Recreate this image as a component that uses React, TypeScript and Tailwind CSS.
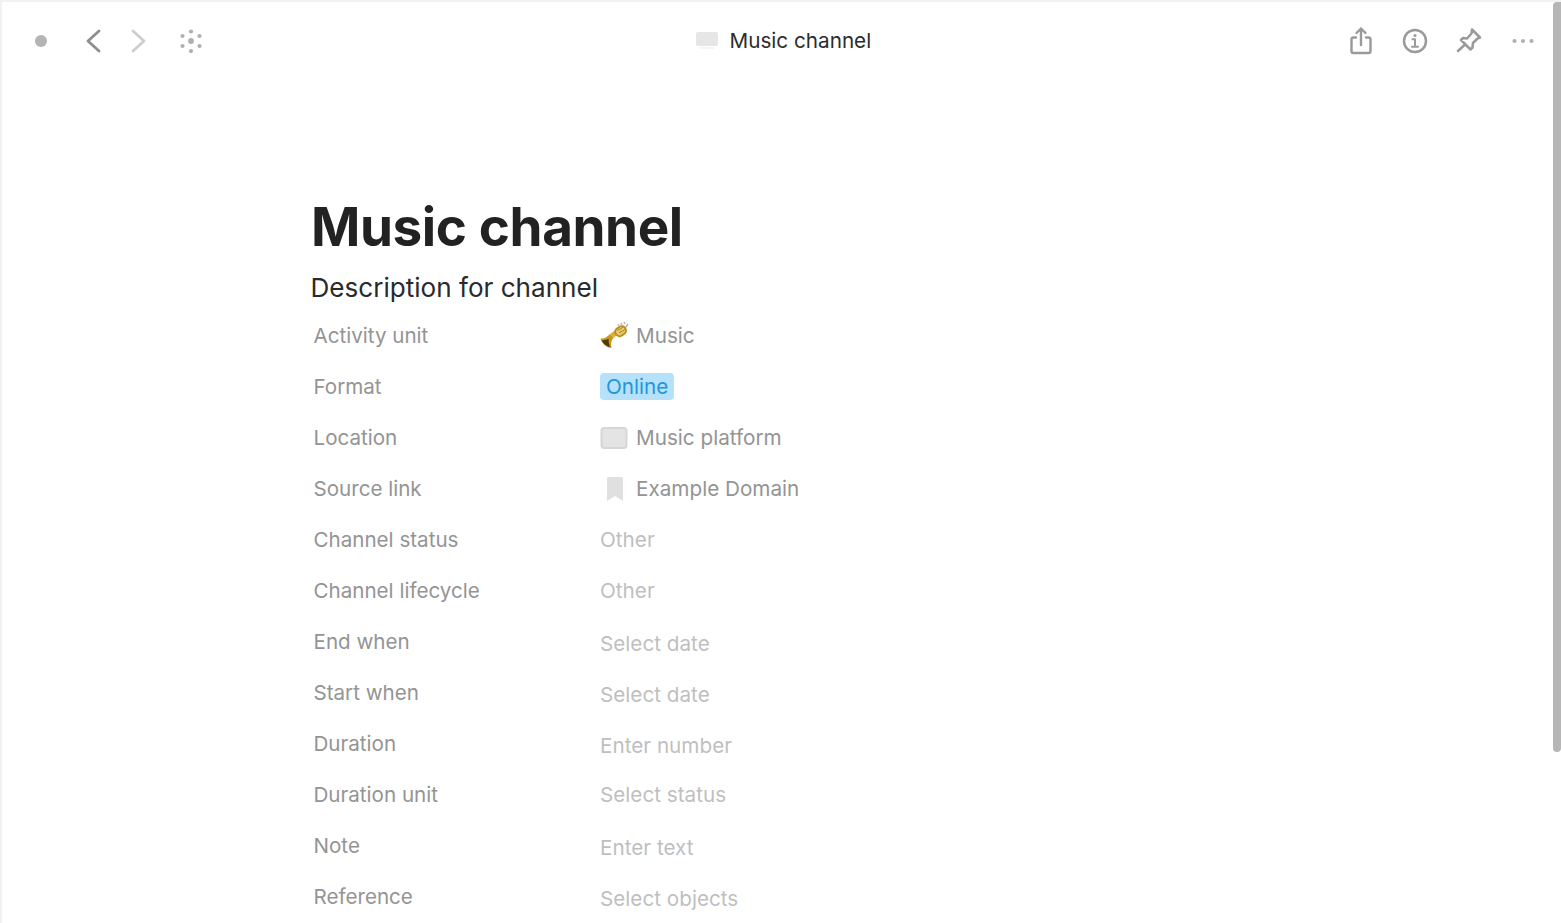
const rows: { label: string; value: string; kind: 'unit' | 'tag' | 'screen' | 'bookmark' | 'empty'; nudge?: string }[] = [
  { label: 'Activity unit', value: 'Music', kind: 'unit' },
  { label: 'Format', value: 'Online', kind: 'tag' },
  { label: 'Location', value: 'Music platform', kind: 'screen' },
  { label: 'Source link', value: 'Example Domain', kind: 'bookmark' },
  { label: 'Channel status', value: 'Other', kind: 'empty' },
  { label: 'Channel lifecycle', value: 'Other', kind: 'empty' },
  { label: 'End when', value: 'Select date', kind: 'empty', nudge: 'translate-y-[2px]' },
  { label: 'Start when', value: 'Select date', kind: 'empty', nudge: 'translate-y-[2px]' },
  { label: 'Duration', value: 'Enter number', kind: 'empty', nudge: 'translate-y-[2px]' },
  { label: 'Duration unit', value: 'Select status', kind: 'empty' },
  { label: 'Note', value: 'Enter text', kind: 'empty', nudge: 'translate-y-[2px]' },
  { label: 'Reference', value: 'Select objects', kind: 'empty', nudge: 'translate-y-[2px]' },
];

function Trumpet() {
  return (
    <svg width="29" height="28" viewBox="0 0 29 28" className="shrink-0">
      {/* bell */}
      <path d="M0.500 17.500c3.500 0.500 7-1.500 9.500-4.500l3.500 4c-2.500 2.500-3 6-2 10-4.500 0-10-4.500-11-9.500z" fill="#c8971c" />
      <path d="M1.500 19c2.500 0.500 5 0 7-1.500 0 3 0.500 6 1.500 8.500-3.500-0.500-7-3.500-8.500-7z" fill="#4f3a0a" />
      {/* tube */}
      <path d="M10 13 19.500 6l2.500 3-8.500 8z" fill="#dcae33" />
      {/* valve loop */}
      <rect x="15" y="6" width="11" height="8.500" rx="4" transform="rotate(-35 20.500 10)" fill="#e9cd78" stroke="#b98c18" strokeWidth="1.800" />
      <path d="M17.500 9.500 23.500 6M19 12l6-3.500" stroke="#a57c14" strokeWidth="1" />
      {/* pistons */}
      <path d="M19 5l-1-2M22 4l-1-2M25 3l-1-2" stroke="#c2bfb2" strokeWidth="1.700" />
      <path d="M25.500 6.500 28 3" stroke="#b0b0a8" strokeWidth="1.300" />
    </svg>
  );
}

function ScreenIcon() {
  return (
    <span className="w-[27px] h-[22px] shrink-0 translate-x-[0.500px] translate-y-[1px] rounded-[4px] border-2 border-[#d6d6d6] bg-[#e4e4e4] mr-[9px]" />
  );
}

function BookmarkIcon() {
  return (
    <svg width="18" height="24" viewBox="0 0 18 24" className="shrink-0 ml-[5.500px] mr-[12.500px] translate-y-[1px]">
      <path d="M1 1.500C1 .8 1.600 0 2.500 0h13c.9 0 1.500.8 1.500 1.500V24l-8-5-8 5z" fill="#e0e0e0" />
    </svg>
  );
}

function PropertyRow({ row }: { row: (typeof rows)[number] }) {
  return (
    <div className="flex items-center h-[51px]">
      <div className="w-[289.500px] pl-[3px] text-[#949494] text-[20.600px] leading-[26px] translate-y-[1px]">{row.label}</div>
      <div className={`flex items-center ${row.nudge ?? ''}`}>
        {row.kind === 'unit' && <span className="mr-[7px]"><Trumpet /></span>}
        {row.kind === 'screen' && <ScreenIcon />}
        {row.kind === 'bookmark' && <BookmarkIcon />}
        {row.kind === 'tag' ? (
          <span className="h-[27px] px-[6px] rounded-[4px] bg-[#b5e1fb] text-[#2596d8] text-[20.700px] leading-[27px]">{row.value}</span>
        ) : (
          <span className={`translate-y-[1px] text-[20.700px] leading-[26px] ${row.kind === 'empty' ? 'text-[#bfbfbf]' : 'text-[#949494]'}`}>{row.value}</span>
        )}
      </div>
    </div>
  );
}

export default function App() {
  return (
    <div className="relative h-[923px] w-[1561px] overflow-hidden bg-white border-t-2 border-l-2 border-[#f1f1f1] font-['Inter',sans-serif]">
      {/* left drag handle + scrollbar */}
      <div className="absolute left-[-2px] top-[139px] h-[54px] w-[2px] rounded-r bg-[#b5b5b5]" />
      <div className="absolute right-0 top-0 h-[750px] w-[8px] rounded-l-[4px] rounded-br-[4px] bg-[#b6b6b6]" />

      <header className="relative flex items-center h-[78px] pl-[33px] pr-[23px]">
        <span className="w-[12px] h-[12px] rounded-full bg-[#b4b4b4]" />
        <svg width="16" height="24" viewBox="0 0 16 24" fill="none" className="ml-[38px]">
          <path d="M14 2 3 12l11 10" stroke="#8e8e8e" strokeWidth="2.800" strokeLinecap="round" strokeLinejoin="round" />
        </svg>
        <svg width="16" height="24" viewBox="0 0 16 24" fill="none" className="ml-[30px]">
          <path d="m2 2 11 10L2 22" stroke="#cdcdcd" strokeWidth="2.800" strokeLinecap="round" strokeLinejoin="round" />
        </svg>
        <svg width="24" height="24" viewBox="0 0 24 24" className="ml-[32px]" fill="#b0b0b0">
          <circle cx="12" cy="2.500" r="2.100" /><circle cx="3.500" cy="7" r="2.100" /><circle cx="20.500" cy="7" r="2.100" />
          <circle cx="12" cy="12" r="2.900" /><circle cx="3.500" cy="17" r="2.100" /><circle cx="20.500" cy="17" r="2.100" /><circle cx="12" cy="22" r="2.100" />
        </svg>

        <div className="absolute left-[693px] top-0 h-[78px] flex items-center">
          <svg width="24" height="18" viewBox="0 0 24 18" className="mr-[10.500px]">
            <rect x="1" y="0" width="22" height="14" rx="2" fill="#e6e6e6" />
            <rect x="5" y="15.500" width="14" height="1" fill="#ececec" />
          </svg>
          <span className="text-[#2c2c2c] text-[20.700px]">Music channel</span>
        </div>

        <div className="ml-auto flex items-center gap-[24px] text-[#9a9a9a]">
          <svg width="30" height="30" viewBox="0 0 30 30" fill="none" stroke="currentColor" strokeWidth="2.400" strokeLinecap="round" strokeLinejoin="round">
            <path d="M10 11.500H7.500a2 2 0 0 0-2 2V25a2 2 0 0 0 2 2h15a2 2 0 0 0 2-2V13.500a2 2 0 0 0-2-2H20" />
            <path d="M15 19V2.500M10.500 7 15 2.500 19.500 7" />
          </svg>
          <svg width="30" height="30" viewBox="0 0 30 30" fill="none" stroke="currentColor" strokeWidth="2.500" strokeLinecap="round" strokeLinejoin="round">
            <circle cx="15" cy="15" r="11" />
            <circle cx="15" cy="9.500" r="1.500" fill="currentColor" stroke="none" />
            <path d="M12.500 13.200H15V20.500M12 20.700h6" strokeWidth="2" />
          </svg>
          <svg width="30" height="30" viewBox="0 0 30 30" fill="none" stroke="currentColor" strokeWidth="2.500" strokeLinecap="round" strokeLinejoin="round">
            <path d="M18 3.500 26 11.500 23.500 12.500 19 17 18.500 21.500 16.500 23.500 7 14 9 12 13 12.500 17.500 7.500z" />
            <path d="M10.500 19 4 25" />
          </svg>
          <svg width="30" height="30" viewBox="0 0 30 30" fill="#b0b0b0">
            <circle cx="6.500" cy="15" r="2.100" /><circle cx="15" cy="15" r="2.100" /><circle cx="23.500" cy="15" r="2.100" />
          </svg>
        </div>
      </header>

      <main className="ml-[308.500px] pt-[115px]">
        <h1 className="ml-[0.500px] text-[#222222] text-[53px] font-bold leading-[64px] tracking-[-0.4px]">Music channel</h1>
        <p className="text-[#2a2a2a] text-[26.100px] leading-[34px] mt-[12px] mb-[4.500px]">Description for channel</p>
        {rows.map((row) => (
          <PropertyRow key={row.label} row={row} />
        ))}
      </main>
    </div>
  );
}
